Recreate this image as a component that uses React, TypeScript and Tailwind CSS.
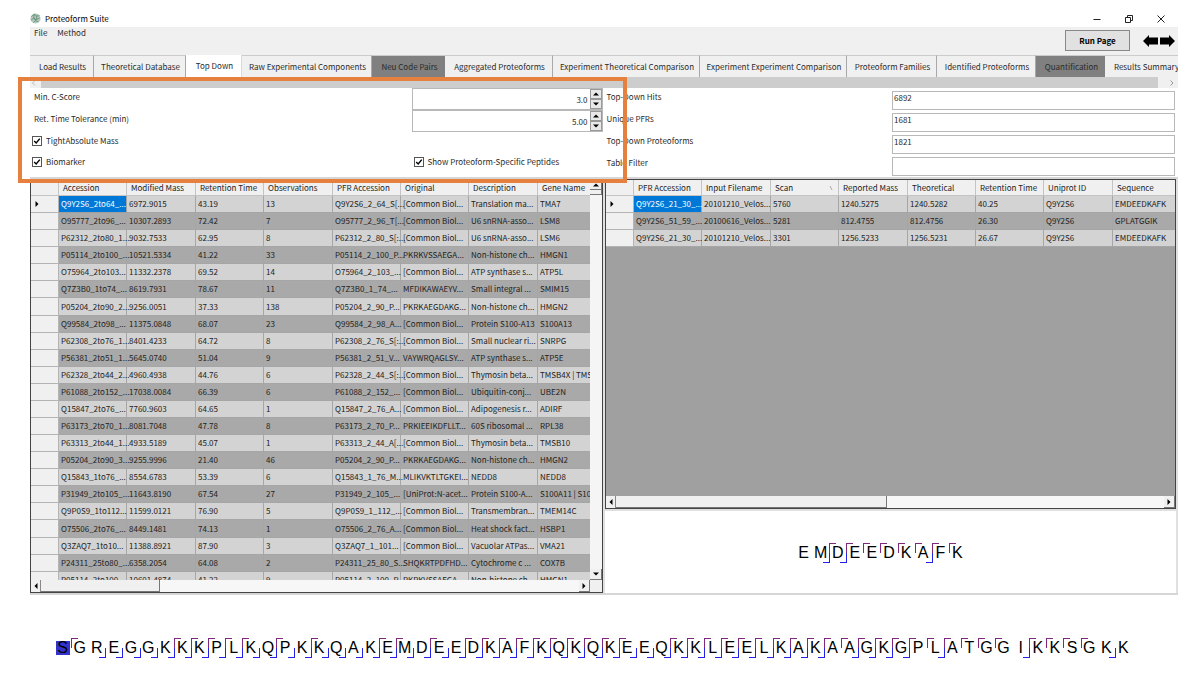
import React from 'react';

type Tab = { label: string; width: string; kind?: 'active' | 'dim' };

const tabs: Tab[] = [
  { label: 'Load Results', width: 'w-16' },
  { label: 'Theoretical Database', width: 'w-[92px]' },
  { label: 'Top Down', width: 'w-14', kind: 'active' },
  { label: 'Raw Experimental Components', width: 'w-[130px]' },
  { label: 'Neu Code Pairs', width: 'w-[73px]', kind: 'dim' },
  { label: 'Aggregated Proteoforms', width: 'w-[108px]' },
  { label: 'Experiment Theoretical Comparison', width: 'w-[147px]' },
  { label: 'Experiment Experiment Comparison', width: 'w-[147px]' },
  { label: 'Proteoform Families', width: 'w-[90px]' },
  { label: 'Identified Proteoforms', width: 'w-[99px]' },
  { label: 'Quantification', width: 'w-[69px]', kind: 'dim' },
  { label: 'Results Summary', width: 'w-[82px]' },
];

const hitColumns = ['Accession', 'Modified Mass', 'Retention Time', 'Observations', 'PFR Accession', 'Original', 'Description', 'Gene Name'];

const hitRows: string[][] = [
  ['Q9Y2S6_2to64_...', '6972.9015', '43.19', '13', 'Q9Y2S6_2_64_S[...', '[Common Biol...', 'Translation ma...', 'TMA7'],
  ['O95777_2to96_...', '10307.2893', '72.42', '7', 'O95777_2_96_T[...', '[Common Biol...', 'U6 snRNA-asso...', 'LSM8'],
  ['P62312_2to80_1...', '9032.7533', '62.95', '8', 'P62312_2_80_S[:...', '[Common Biol...', 'U6 snRNA-asso...', 'LSM6'],
  ['P05114_2to100_...', '10521.5334', '41.22', '33', 'P05114_2_100_P...', 'PKRKVSSAEGA...', 'Non-histone ch...', 'HMGN1'],
  ['O75964_2to103...', '11332.2378', '69.52', '14', 'O75964_2_103_...', '[Common Biol...', 'ATP synthase s...', 'ATP5L'],
  ['Q7Z3B0_1to74_...', '8619.7931', '78.67', '11', 'Q7Z3B0_1_74_...', 'MFDIKAWAEYV...', 'Small integral ...', 'SMIM15'],
  ['P05204_2to90_2...', '9256.0051', '37.33', '138', 'P05204_2_90_P...', 'PKRKAEGDAKG...', 'Non-histone ch...', 'HMGN2'],
  ['Q99584_2to98_...', '11375.0848', '68.07', '23', 'Q99584_2_98_A...', '[Common Biol...', 'Protein S100-A13', 'S100A13'],
  ['P62308_2to76_1...', '8401.4233', '64.72', '8', 'P62308_2_76_S[:...', '[Common Biol...', 'Small nuclear ri...', 'SNRPG'],
  ['P56381_2to51_1...', '5645.0740', '51.04', '9', 'P56381_2_51_V...', 'VAYWRQAGLSY...', 'ATP synthase s...', 'ATP5E'],
  ['P62328_2to44_2...', '4960.4938', '44.76', '6', 'P62328_2_44_S[:...', '[Common Biol...', 'Thymosin beta...', 'TMSB4X | TMS'],
  ['P61088_2to152_...', '17038.0084', '66.39', '6', 'P61088_2_152_...', '[Common Biol...', 'Ubiquitin-conj...', 'UBE2N'],
  ['Q15847_2to76_...', '7760.9603', '64.65', '1', 'Q15847_2_76_A...', '[Common Biol...', 'Adipogenesis r...', 'ADIRF'],
  ['P63173_2to70_1...', '8081.7048', '47.78', '8', 'P63173_2_70_P...', 'PRKIEEIKDFLLT...', '60S ribosomal ...', 'RPL38'],
  ['P63313_2to44_1...', '4933.5189', '45.07', '1', 'P63313_2_44_A[...', '[Common Biol...', 'Thymosin beta...', 'TMSB10'],
  ['P05204_2to90_3...', '9255.9996', '21.40', '46', 'P05204_2_90_P...', 'PKRKAEGDAKG...', 'Non-histone ch...', 'HMGN2'],
  ['Q15843_1to76_...', '8554.6783', '53.39', '6', 'Q15843_1_76_M...', 'MLIKVKTLTGKEI...', 'NEDD8', 'NEDD8'],
  ['P31949_2to105_...', '11643.8190', '67.54', '27', 'P31949_2_105_...', '[UniProt:N-acet...', 'Protein S100-A...', 'S100A11 | S10'],
  ['Q9P0S9_1to112...', '11599.0121', '76.90', '5', 'Q9P0S9_1_112_...', '[Common Biol...', 'Transmembran...', 'TMEM14C'],
  ['O75506_2to76_...', '8449.1481', '74.13', '1', 'O75506_2_76_A...', '[Common Biol...', 'Heat shock fact...', 'HSBP1'],
  ['Q3ZAQ7_1to10...', '11388.8921', '87.90', '3', 'Q3ZAQ7_1_101...', '[Common Biol...', 'Vacuolar ATPas...', 'VMA21'],
  ['P24311_25to80_...', '6358.2054', '64.08', '2', 'P24311_25_80_S...', 'SHQKRTPDFHD...', 'Cytochrome c ...', 'COX7B'],
  ['P05114_2to100_...', '10601.4874', '41.22', '9', 'P05114_2_100_P...', 'PKRKVSSAEGA...', 'Non-histone ch...', 'HMGN1'],
];

const pfrColumns = ['PFR Accession', 'Input Filename', 'Scan', 'Reported Mass', 'Theoretical', 'Retention Time', 'Uniprot ID', 'Sequence'];

const pfrRows: string[][] = [
  ['Q9Y2S6_21_30_...', '20101210_Velos...', '5760', '1240.5275', '1240.5282', '40.25', 'Q9Y2S6', 'EMDEEDKAFK'],
  ['Q9Y2S6_51_59_...', '20100616_Velos...', '5281', '812.4755', '812.4756', '26.30', 'Q9Y2S6', 'GPLATGGIK'],
  ['Q9Y2S6_21_30_...', '20101210_Velos...', '3301', '1256.5233', '1256.5231', '26.67', 'Q9Y2S6', 'EMDEEDKAFK'],
];

const columnWidths = ['w-[68px]', 'w-[69px]', 'w-[68px]', 'w-[69px]', 'w-[68px]', 'w-[68px]', 'w-[69px]', 'w-[68px]'];

/* Fragment marks after each residue: p = upper, b = lower, x = both, - = none */
const peptide = { letters: 'EMDEEDKAFK', marks: '-xxppppxp-' };
const protein = {
  letters: 'SGREGGKKKPLKQPKKQAKEMDEEDKAFKQKQKEEQKKLEELKAKAAGKGPLATGGIKKSGKK',
  marks: 'p-bbbbxxxxxbxbxbbbxxbxbxxxxxxxxxxbbxxxxxxxxxxpxxxxpxppp-xppp-b-',
};

type Dir = 'up' | 'down' | 'left' | 'right';
const arrowPaths: Record<Dir, string> = {
  up: 'M1 5.5L4 2.5L7 5.5Z',
  down: 'M1 2.5L4 5.5L7 2.5Z',
  left: 'M5.5 1L2.5 4L5.5 7Z',
  right: 'M2.5 1L5.5 4L2.5 7Z',
};

function Arrow({ dir }: { dir: Dir }) {
  return (
    <svg viewBox="0 0 8 8" className="size-2 fill-black" aria-hidden="true">
      <path d={arrowPaths[dir]} />
    </svg>
  );
}

function Grid({ columns, rows, label, sorted, height = '' }: { columns: string[]; rows: string[][]; label: string; sorted?: string; height?: string }) {
  return (
    <table aria-label={label} className={`${height} w-0 table-fixed border-separate border-spacing-0 text-[8px] leading-[12px] text-[#222]`}>
      <colgroup>
        <col className="w-7" />
        {columns.map((c, i) => (
          <col key={c} className={columnWidths[i]} />
        ))}
      </colgroup>
      <thead>
        <tr className="h-4 bg-[#f0f0f0]">
          <th className="border-r border-b border-[#c4c4c4] p-0" />
          {columns.map((c) => (
            <th key={c} className="border-r border-b border-[#c4c4c4] py-0 pr-0 pl-1 text-left font-normal whitespace-nowrap">
              <div className="flex justify-between">
                <span>{c}</span>
                {c === sorted && (
                  <svg viewBox="0 0 6 8" className="mr-1 h-3 w-1.5 fill-none stroke-[#aaa]" aria-hidden="true">
                    <path d="M2 2L4 6" />
                  </svg>
                )}
              </div>
            </th>
          ))}
        </tr>
      </thead>
      <tbody>
        {rows.map((row, r) => (
          <tr key={r} className={r % 2 ? 'h-[17px] bg-[#a9a9a9]' : 'h-[17px] bg-[#d3d3d3]'}>
            <td className="border-r border-b border-[#b4b4b4] bg-[#f0f0f0] p-0 pl-0.5">{r === 0 && <Arrow dir="right" />}</td>
            {row.map((cell, c) => (
              <td
                key={c}
                className={
                  r === 0 && c === 0
                    ? 'border-r border-b border-[#a0a0a0] bg-[#0078d7] py-0 pr-0 pl-0.5 whitespace-nowrap text-white'
                    : 'border-r border-b border-[#a6a6a6] py-0 pr-0 pl-0.5 whitespace-nowrap'
                }
              >
                {cell}
              </td>
            ))}
          </tr>
        ))}
      </tbody>
    </table>
  );
}

function HScroll({ thumb }: { thumb: string }) {
  return (
    <div className="flex h-3 flex-1 bg-[#f7f7f7]">
      <button aria-label="Scroll left" className="flex w-[10px] items-center justify-center border-r border-[#888] bg-[#f0f0f0]">
        <Arrow dir="left" />
      </button>
      <div className={`${thumb} border-r border-b border-[#777] bg-[#f0f0f0]`} />
      <div className="flex-1" />
      <button aria-label="Scroll right" className="flex w-[11px] items-center justify-center border-r border-b border-[#777] bg-[#f0f0f0]">
        <Arrow dir="right" />
      </button>
    </div>
  );
}

function Sequence({ letters, marks, highlightFirst = false }: { letters: string; marks: string; highlightFirst?: boolean }) {
  return (
    <div className="flex h-5 w-full text-center font-['Liberation_Sans',Arial,sans-serif] text-[16px] leading-5 text-black">
      {letters.split('').map((letter, i) => {
        const mark = marks[i];
        return (
          <span key={i} className="relative min-w-0 flex-1">
            {i === 0 && highlightFirst ? <span className="mx-auto mt-[3px] block h-[14px] w-3.5 bg-[#3333cc] leading-[14px]">{letter}</span> : letter}
            {(mark === 'p' || mark === 'x') && <span className="absolute top-0 left-full h-2.5 w-[7px] border-t border-l border-[#80287f]" />}
            {(mark === 'b' || mark === 'x') && <span className="absolute -right-px bottom-0 h-2.5 w-[7px] border-r border-b border-[#2222e8]" />}
          </span>
        );
      })}
    </div>
  );
}

function Spinner({ label, value }: { label: string; value: string }) {
  const id = label.replace(/\W+/g, '-');
  return (
    <div className="flex h-[22px]">
      <label htmlFor={id} className="flex-1 pt-1 pl-1">
        {label}
      </label>
      <div className="flex h-[22px] w-[191px] border border-[#b8b8b8] bg-white">
        <input id={id} defaultValue={value} className="min-w-0 flex-1 pt-0.5 pr-0.5 text-right outline-none" />
        <div className="flex w-3 flex-col">
          <button type="button" aria-label={`Increase ${label}`} className="flex flex-1 items-center justify-center border border-[#999] bg-[#e8e8e8]">
            <Arrow dir="up" />
          </button>
          <button type="button" aria-label={`Decrease ${label}`} className="flex flex-1 items-center justify-center border border-[#999] bg-[#e8e8e8]">
            <Arrow dir="down" />
          </button>
        </div>
      </div>
    </div>
  );
}

function Check({ label }: { label: string }) {
  return (
    <label className="flex items-center gap-1 pl-0.5">
      <span className="grid size-[10px]">
        <input type="checkbox" defaultChecked className="peer col-start-1 row-start-1 size-[10px] appearance-none border border-[#555] bg-white" />
        <svg viewBox="0 0 10 10" className="pointer-events-none col-start-1 row-start-1 hidden size-[10px] fill-none stroke-black stroke-[1.4] peer-checked:block" aria-hidden="true">
          <path d="M2.2 5L4.2 7L7.8 2.6" />
        </svg>
      </span>
      {label}
    </label>
  );
}

function Field({ label, value }: { label: string; value: string }) {
  const id = label.replace(/\W+/g, '-');
  return (
    <div className="flex h-[22px]">
      <label htmlFor={id} className="flex-1 pt-1 pl-1">
        {label}
      </label>
      <input id={id} defaultValue={value} className="mt-[3px] h-[19px] w-[283px] border border-[#b8b8b8] bg-white px-px pb-1.5 outline-none" />
    </div>
  );
}

export default function App() {
  return (
    <div className="min-h-screen overflow-hidden bg-white pr-[5px] pl-[30px] font-['Noto_Sans_CJK_SC','Noto_Sans',sans-serif] text-[8px] leading-[10px] text-[#2a2a2a]">
      <header className="flex h-[27px] items-end justify-between pb-[3px]">
        <h1 className="flex items-center gap-1 text-[8px] leading-[10px] font-normal text-black">
          <svg viewBox="0 0 10 10" className="size-[11px]" aria-hidden="true">
            <circle cx="5" cy="5" r="4.6" fill="#b4cabd" />
            <path d="M1.2 3.2L4 1.2L6.2 2.8L8.6 2.4M1 6.4L3.4 4.6L5.4 6L8.8 4.6M3.2 8.6L5.2 7L7.6 8" stroke="#5c9176" strokeWidth=".8" fill="none" />
            <path d="M3.4 4.6L4 1.2M5.4 6L6.2 2.8M5.2 7L3.4 4.6" stroke="#6c8377" fill="none" strokeWidth=".7" />
          </svg>
          Proteoform Suite
        </h1>
        <div className="mr-3 flex items-center gap-[22px]">
          <button aria-label="Minimize">
            <svg viewBox="0 0 10 10" className="size-[10px] fill-none stroke-[#222]"><path d="M1.5 5.5H8.5" /></svg>
          </button>
          <button aria-label="Restore">
            <svg viewBox="0 0 10 10" className="size-[10px] fill-none stroke-[#222]"><path d="M1.5 3.5H6.5V8.5H1.5ZM3.5 3.5V1.5H8.5V6.5H6.5" /></svg>
          </button>
          <button aria-label="Close">
            <svg viewBox="0 0 10 10" className="size-[10px] fill-none stroke-[#222]"><path d="M1.5 1.5L8.5 8.5M8.5 1.5L1.5 8.5" /></svg>
          </button>
        </div>
      </header>

      <div className="flex h-7 items-start justify-between bg-[#f0f0f0]">
        <nav className="flex gap-[10px] pt-px pl-1">
          <button>File</button>
          <button>Method</button>
        </nav>
        <div className="flex items-center gap-[13px] pt-[3px] pr-[3px]">
          <button className="h-[21px] w-[65px] border border-[#888] bg-[#e1e1e1] font-bold text-black">Run Page</button>
          <div className="flex gap-0.5">
            <button aria-label="Previous page">
              <svg viewBox="0 0 15 12" className="h-3 w-[15px] fill-black"><path d="M0 6L6 0V2.5H15V9.5H6V12Z" /></svg>
            </button>
            <button aria-label="Next page">
              <svg viewBox="0 0 15 12" className="h-3 w-[15px] fill-black"><path d="M15 6L9 0V2.5H0V9.5H9V12Z" /></svg>
            </button>
          </div>
        </div>
      </div>

      <div role="tablist" className="flex h-[22px] overflow-hidden bg-[#f0f0f0]">
        {tabs.map((t) => (
          <button
            key={t.label}
            role="tab"
            aria-selected={t.kind === 'active'}
            className={`${t.width} shrink-0 pl-0.5 whitespace-nowrap ${
              t.kind === 'active'
                ? 'border-r border-[#d9d9d9] bg-white'
                : t.kind === 'dim'
                  ? 'border-t border-[#ccc] bg-[#808080]'
                  : 'border-t border-r border-t-[#ccc] border-r-[#a8a8a8] bg-[#f0f0f0]'
            }`}
          >
            {t.label}
          </button>
        ))}
      </div>

      <section className="relative">
        <div className="flex h-[11px] bg-[#cdcdcd]">
          <button aria-label="Scroll tabs left" className="flex w-[11px] items-center bg-[#f0f0f0]">
            <svg viewBox="0 0 8 8" className="size-2 fill-none stroke-[#bbb]"><path d="M5 1.5L2.5 4L5 6.5" /></svg>
          </button>
          <div className="flex-1" />
          <button aria-label="Scroll tabs right" className="flex w-5 items-center justify-end bg-[#f0f0f0] pr-0.5">
            <svg viewBox="0 0 8 8" className="size-2 fill-none stroke-[#999]"><path d="M2.5 1.5L5 4L2.5 6.5" /></svg>
          </button>
        </div>
        <form className="flex h-[89px] pr-0.5" onSubmit={(e) => e.preventDefault()}>
          <div className="flex-1">
            <Spinner label="Min. C-Score" value="3.0" />
            <Spinner label="Ret. Time Tolerance (min)" value="5.00" />
            <div className="flex h-[18px]">
              <Check label="TightAbsolute Mass" />
            </div>
            <div className="flex h-6 justify-between">
              <Check label="Biomarker" />
              <div className="flex w-[191px]">
                <Check label="Show Proteoform-Specific Peptides" />
              </div>
            </div>
          </div>
          <div className="flex-1 pr-px">
            <Field label="Top-Down Hits" value="6892" />
            <Field label="Unique PFRs" value="1681" />
            <Field label="Top-Down Proteoforms" value="1821" />
            <Field label="Table Filter" value="" />
          </div>
        </form>
        <div className="pointer-events-none absolute top-0 -left-3 h-[106px] w-[609px] border-4 border-[#e5803f]" />
      </section>

      <main className="flex h-[418px] gap-0.5 border-y-2 border-[#d6d6d6] bg-[#e0e0e0] pr-0.5">
        <div className="flex min-w-0 flex-1 flex-col border border-[#444] bg-[#f0f0f0]">
          <div className="flex min-h-0 flex-1">
            <div className="min-w-0 flex-1 overflow-hidden">
              <Grid label="Top-down proteoforms" columns={hitColumns} rows={hitRows} height="h-[409px]" />
            </div>
            <div className="flex w-3 flex-col bg-[#f5f5f5]">
              <button aria-label="Scroll up" className="flex h-[10px] items-center justify-center border-r border-b border-[#777] bg-[#f0f0f0]">
                <Arrow dir="up" />
              </button>
              <div className="h-[5px] border-r border-b border-[#777] bg-[#f0f0f0]" />
              <div className="flex-1" />
              <button aria-label="Scroll down" className="flex h-[11px] items-center justify-center border-r border-b border-[#777] bg-[#f0f0f0]">
                <Arrow dir="down" />
              </button>
            </div>
          </div>
          <div className="flex">
            <HScroll thumb="w-[119px]" />
            <div className="w-3" />
          </div>
        </div>

        <div className="flex min-w-0 flex-1 flex-col gap-0.5">
          <div className="flex h-[330px] flex-col border border-[#444] bg-[#a0a0a0]">
            <div className="min-h-0 flex-1 overflow-hidden">
              <Grid label="Top-down hits" columns={pfrColumns} rows={pfrRows} sorted="Scan" />
            </div>
            <div className="flex">
              <HScroll thumb="w-[271px]" />
            </div>
          </div>
          <div className="flex flex-1 items-center justify-center bg-white pt-0.5 pr-5">
            <div className="w-[171px]">
              <Sequence letters={peptide.letters} marks={peptide.marks} />
            </div>
          </div>
        </div>
      </main>

      <section className="pt-[43px] pr-[46px] pl-6">
        <Sequence letters={protein.letters} marks={protein.marks} highlightFirst />
      </section>
    </div>
  );
}
